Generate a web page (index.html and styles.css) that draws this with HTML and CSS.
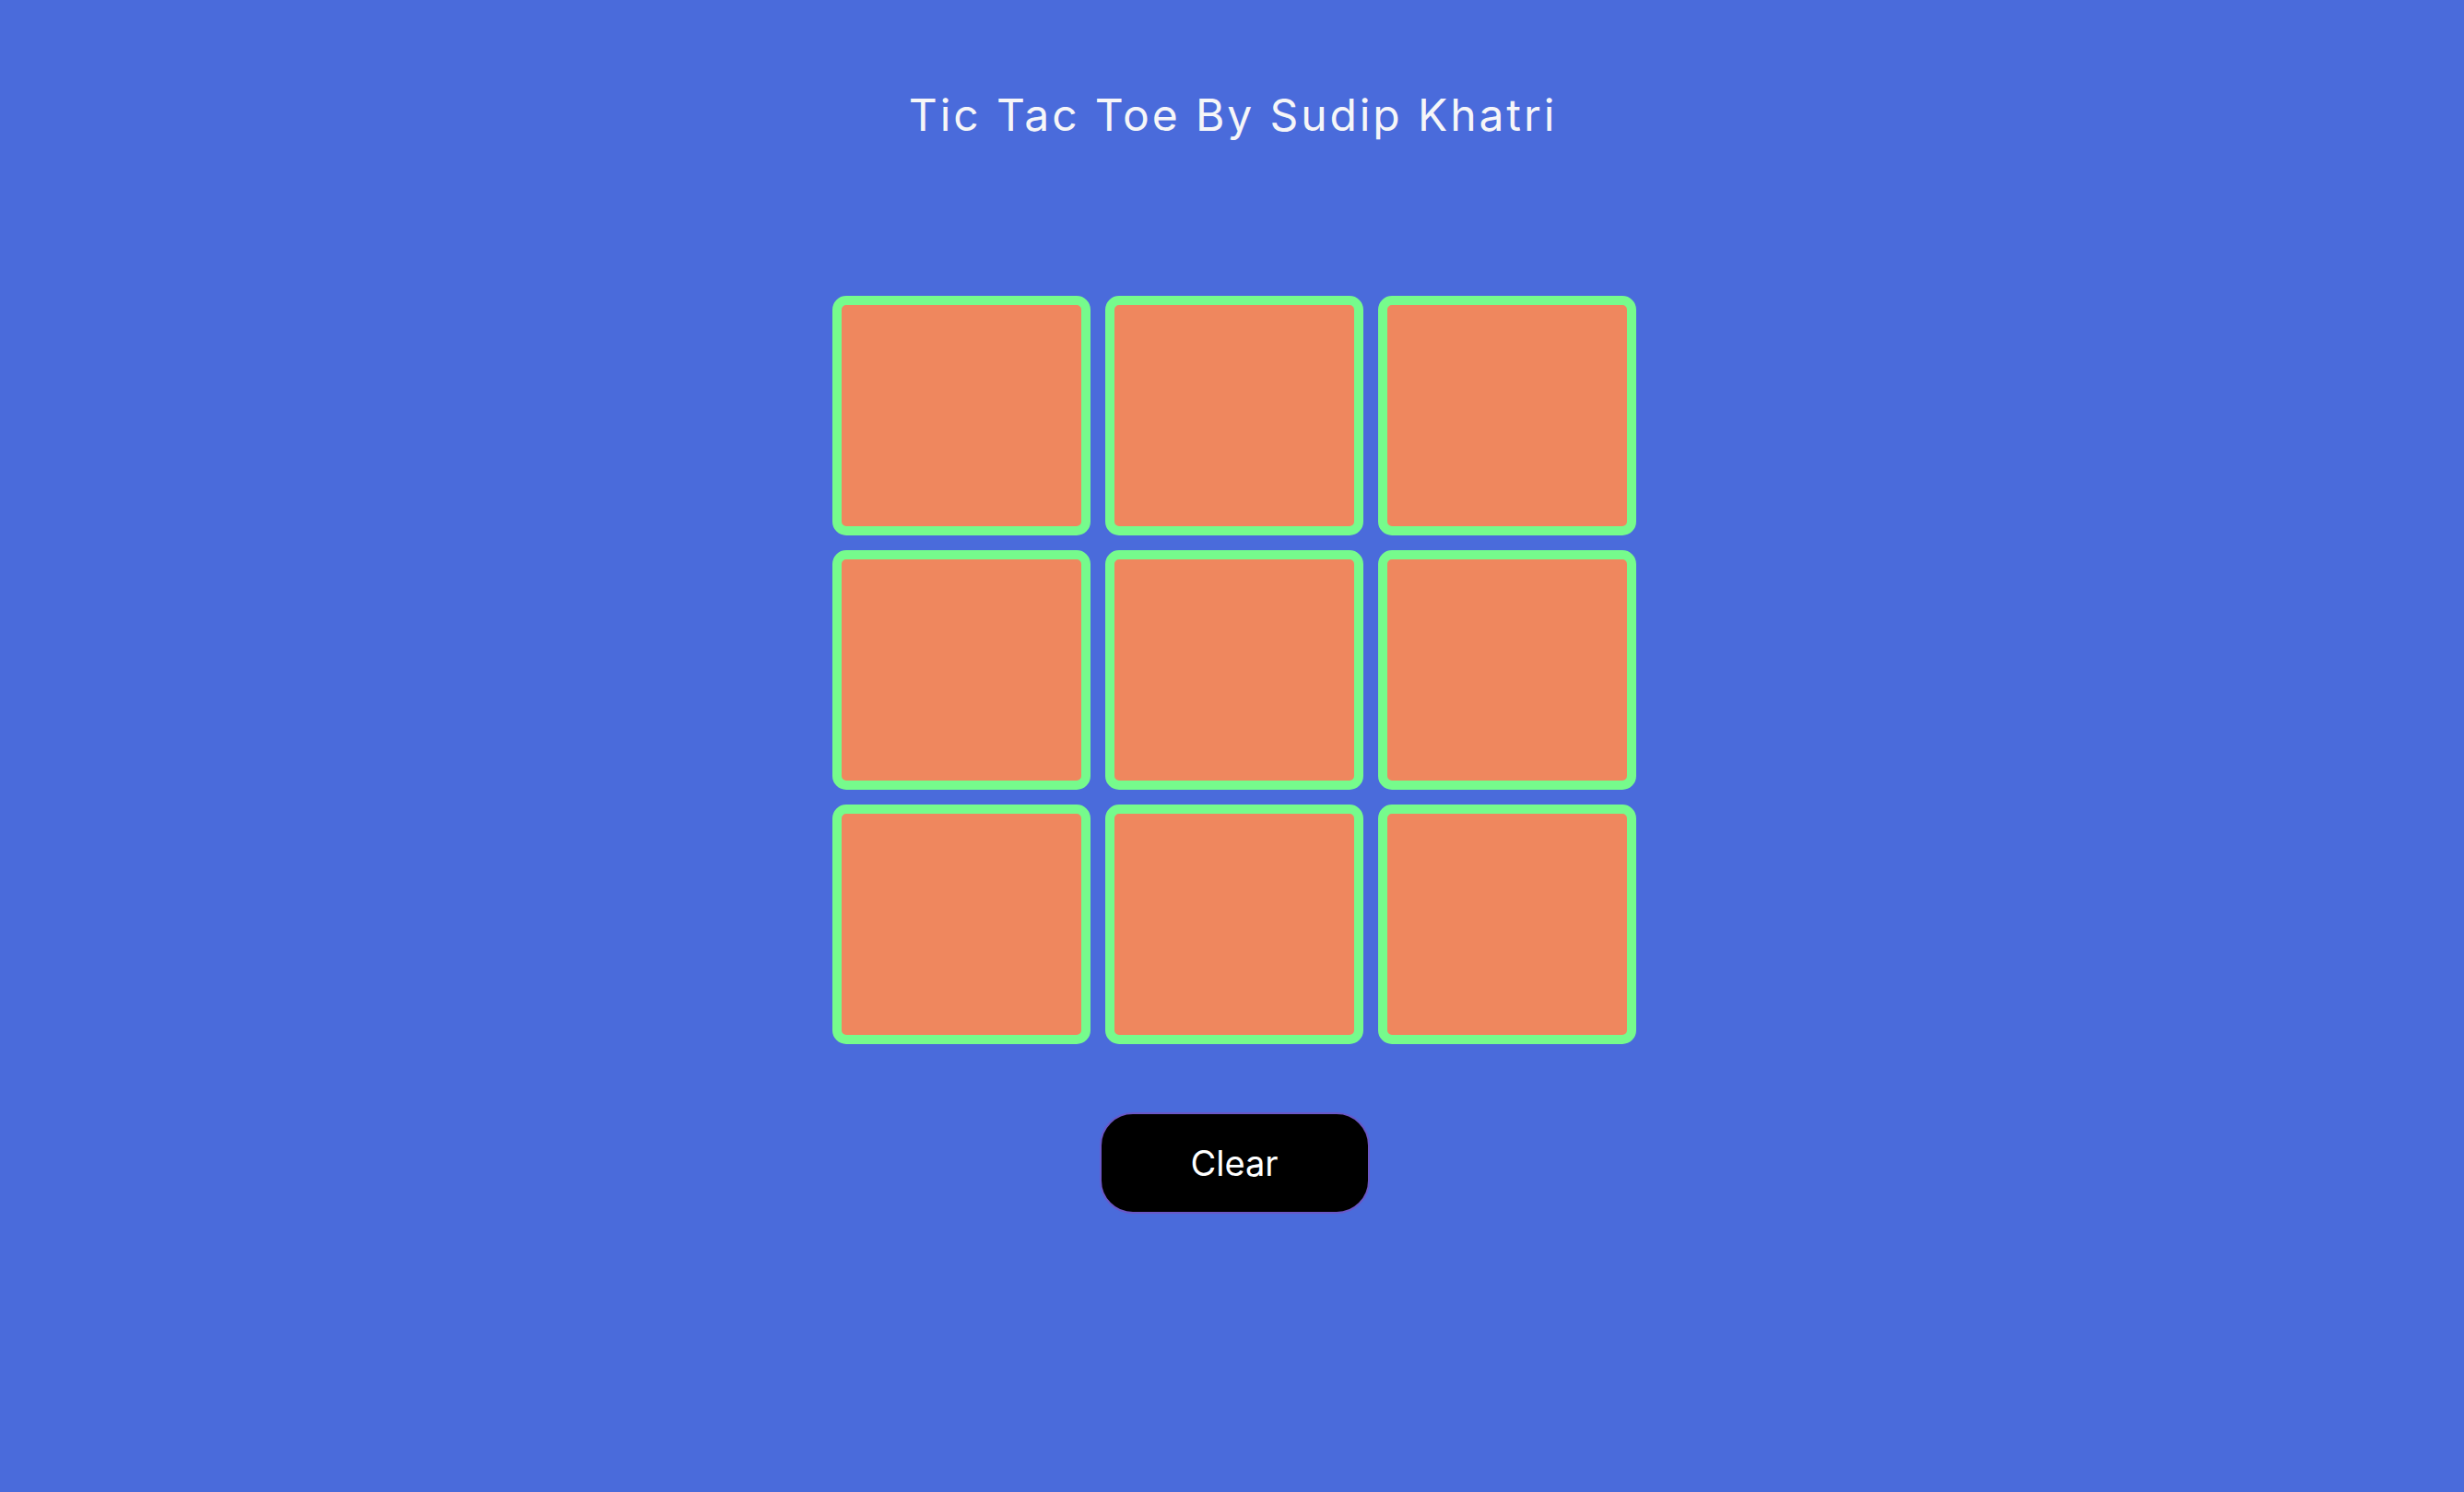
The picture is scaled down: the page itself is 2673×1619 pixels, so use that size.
FILE: index.html
```html
<!DOCTYPE html>
<html lang="en">
<head>
<meta charset="utf-8">
<title>Tic Tac Toe</title>
<link rel="stylesheet" href="styles.css">
</head>
<body>
<main class="game">
  <h1 class="title">Tic Tac Toe By Sudip Khatri</h1>
  <div class="board">
    <div class="cell"></div>
    <div class="cell"></div>
    <div class="cell"></div>
    <div class="cell"></div>
    <div class="cell"></div>
    <div class="cell"></div>
    <div class="cell"></div>
    <div class="cell"></div>
    <div class="cell"></div>
  </div>
  <button class="clear-btn" type="button">Clear</button>
</main>
</body>
</html>
```

FILE: styles.css
```css
html, body {
  margin: 0;
  padding: 0;
}
body {
  background: #4a6bdb;
  min-height: 100vh;
  font-family: Inter, "Noto Sans", sans-serif;
}
.game {
  display: flex;
  flex-direction: column;
  align-items: center;
  padding-left: 5px;
}
.title {
  margin: 96px 0 0 -3px;
  font-size: 48px;
  line-height: 58px;
  font-weight: 400;
  letter-spacing: 2.9px;
  color: #f6f6f8;
}
.board {
  margin-top: 167px;
  display: grid;
  grid-template-columns: repeat(3, 280px);
  grid-template-rows: repeat(3, 260px);
  gap: 16px;
}
.cell {
  box-sizing: border-box;
  background: #ef875e;
  border: 10px solid #76fb8c;
  border-radius: 15px;
}
.clear-btn {
  margin-top: 74px;
  box-sizing: border-box;
  width: 293px;
  height: 110px;
  background: #000;
  color: #fff;
  border: 2px solid #6a57c6;
  border-radius: 36px;
  font-family: Inter, "Noto Sans", sans-serif;
  font-size: 38px;
  cursor: pointer;
}
```
